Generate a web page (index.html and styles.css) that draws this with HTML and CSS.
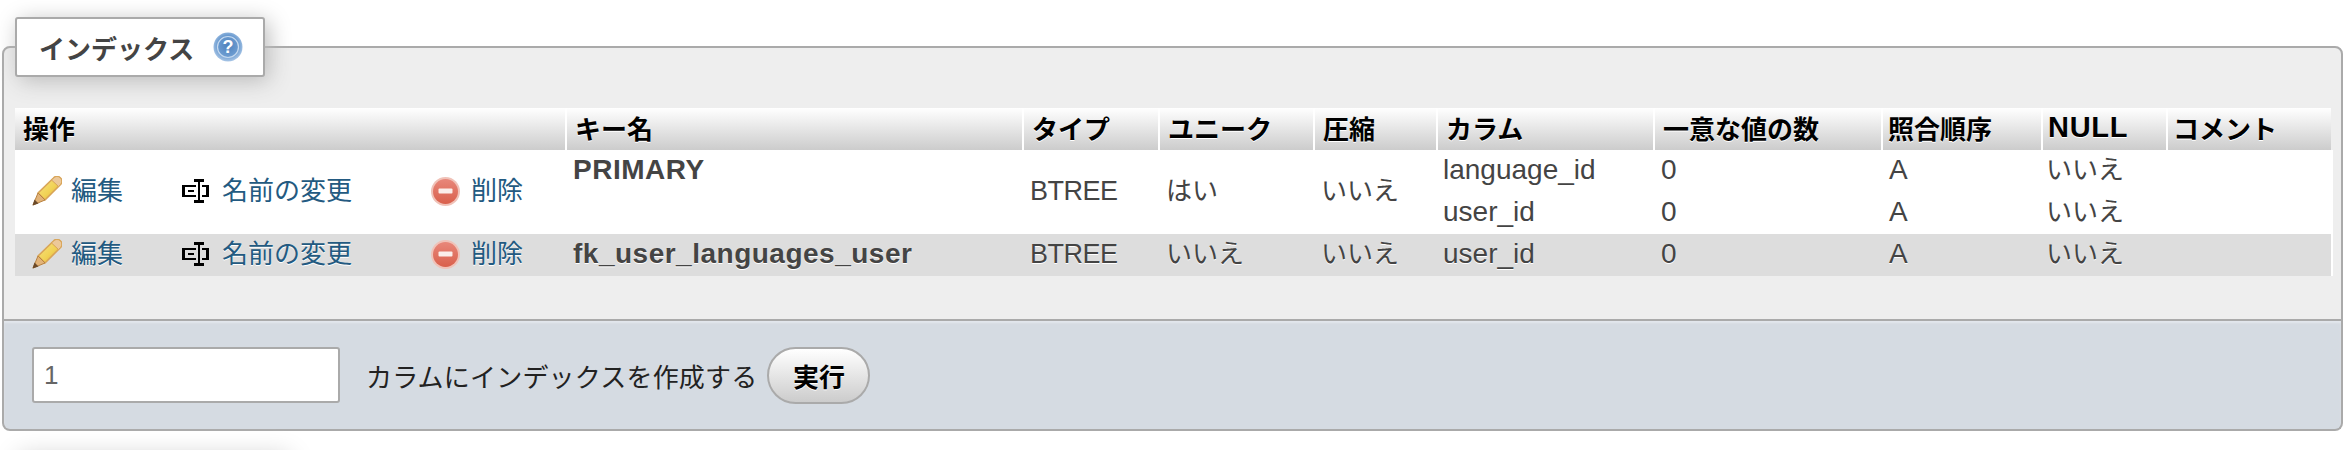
FILE: index.html
```html
<!DOCTYPE html>
<html>
<head>
  <meta charset="utf-8">
  <link rel="stylesheet" href="styles.css">
</head>
<body>
  <fieldset class="index-box">
    <legend>
      <span>インデックス</span>
      <svg class="help-icon" viewBox="0 0 30 30" width="30" height="30">
        <defs>
          <radialGradient id="helpFill" cx="50%" cy="45%" r="55%">
            <stop offset="0%" stop-color="#4f82bd"/>
            <stop offset="65%" stop-color="#6b9bd0"/>
            <stop offset="100%" stop-color="#a9c6e6"/>
          </radialGradient>
        </defs>
        <circle cx="15" cy="15" r="14.5" fill="url(#helpFill)"/>
        <circle cx="15" cy="15" r="10.5" fill="none" stroke="#c5d9ef" stroke-width="1.2"/>
        <text x="15" y="21" class="help-mark">?</text>
      </svg>
    </legend>
    <table class="index-table">
      <colgroup>
        <col class="col-edit">
        <col class="col-rename">
        <col class="col-drop">
        <col class="col-key">
        <col class="col-type">
        <col class="col-unique">
        <col class="col-packed">
        <col class="col-column">
        <col class="col-card">
        <col class="col-collation">
        <col class="col-null">
        <col class="col-comment">
      </colgroup>
      <thead>
        <tr>
          <th colspan="3">操作</th>
          <th>キー名</th>
          <th>タイプ</th>
          <th>ユニーク</th>
          <th>圧縮</th>
          <th>カラム</th>
          <th>一意な値の数</th>
          <th class="narrow">照合順序</th>
          <th class="narrow null-head">NULL</th>
          <th class="narrow">コメント</th>
        </tr>
      </thead>
      <tbody>
        <tr>
          <td rowspan="2" class="action"><a href="#"><svg class="icon" viewBox="0 0 30 30" width="30" height="30"><use href="#pencil"/></svg>編集</a></td>
          <td rowspan="2" class="action rename"><a href="#"><svg class="icon" viewBox="0 0 27 24" width="27" height="24"><use href="#rename"/></svg>名前の変更</a></td>
          <td rowspan="2" class="action drop"><a href="#"><svg class="icon" viewBox="0 0 29 29" width="29" height="29"><use href="#minus"/></svg>削除</a></td>
          <td rowspan="2" class="key-name top">PRIMARY</td>
          <td rowspan="2" class="type">BTREE</td>
          <td rowspan="2">はい</td>
          <td rowspan="2">いいえ</td>
          <td class="column-name">language_id</td>
          <td class="latin">0</td>
          <td class="latin">A</td>
          <td class="tight">いいえ</td>
          <td rowspan="2" class="last"></td>
        </tr>
        <tr>
          <td class="column-name">user_id</td>
          <td class="latin">0</td>
          <td class="latin">A</td>
          <td class="tight">いいえ</td>
        </tr>
        <tr class="even">
          <td class="action"><a href="#"><svg class="icon" viewBox="0 0 30 30" width="30" height="30"><use href="#pencil"/></svg>編集</a></td>
          <td class="action rename"><a href="#"><svg class="icon" viewBox="0 0 27 24" width="27" height="24"><use href="#rename"/></svg>名前の変更</a></td>
          <td class="action drop"><a href="#"><svg class="icon" viewBox="0 0 29 29" width="29" height="29"><use href="#minus"/></svg>削除</a></td>
          <td class="key-name">fk_user_languages_user</td>
          <td class="type">BTREE</td>
          <td>いいえ</td>
          <td>いいえ</td>
          <td class="column-name">user_id</td>
          <td class="latin">0</td>
          <td class="latin">A</td>
          <td class="tight">いいえ</td>
          <td class="last"></td>
        </tr>
      </tbody>
    </table>
  </fieldset>

  <form class="tbl-footer">
    <input type="text" class="count-input" value="1">
    <span class="footer-label">カラムにインデックスを作成する</span>
    <button type="button" class="go-button">実行</button>
  </form>

  <div class="next-legend"></div>

  <!-- icon sprites -->
  <svg class="sprites" width="0" height="0">
    <defs>
      <linearGradient id="pencilBody" x1="0" y1="0" x2="1" y2="1">
        <stop offset="0%" stop-color="#f8e58a"/>
        <stop offset="55%" stop-color="#f1d255"/>
        <stop offset="100%" stop-color="#d99a32"/>
      </linearGradient>
      <linearGradient id="minusFill" x1="0" y1="0" x2="0" y2="1">
        <stop offset="0%" stop-color="#e8877a"/>
        <stop offset="100%" stop-color="#d9604c"/>
      </linearGradient>
      <symbol id="pencil" viewBox="0 0 30 30">
        <path d="M6 17L21.500 2a4.500 4.500 0 0 1 7 6.500L13 24z" fill="url(#pencilBody)" stroke="#d8a458" stroke-width="1.600" stroke-linejoin="round"/>
        <path d="M21.500 2a4.500 4.500 0 0 1 7 6.500L26.500 10.500L19.500 4z" fill="#ecc899" stroke="#d8a458" stroke-width="1"/>
        <path d="M6 17L13 24L1 29z" fill="#e2b378" stroke="#b98240" stroke-width="1" stroke-linejoin="round"/>
        <path d="M2.500 23.500L6.500 27.500L0.500 29.500z" fill="#6b4a2a"/>
      </symbol>
      <symbol id="rename" viewBox="0 0 27 24">
        <g fill="none" stroke="#000" stroke-width="2.600" shape-rendering="crispEdges">
          <path d="M14 7H1.500V17H14"/>
          <path d="M6 12H12"/>
          <path d="M17 2V22"/>
          <path d="M12 1.500H22M12 22.500H22"/>
          <path d="M20 7H25.500V17H20"/>
        </g>
      </symbol>
      <symbol id="minus" viewBox="0 0 29 29">
        <circle cx="14.500" cy="14.500" r="14.500" fill="#f0c2b8"/>
        <circle cx="14.500" cy="14.500" r="12.500" fill="url(#minusFill)"/>
        <rect x="7.500" y="11.500" width="14" height="5" rx="1" fill="#fbeeea"/>
      </symbol>
    </defs>
  </svg>
</body>
</html>
```

FILE: styles.css
```css
html {
  overflow: hidden;
}

body {
  margin: 0;
  padding: 17px 6px 0 2px;
  font-family: "Liberation Sans", "Noto Sans CJK JP", sans-serif;
  font-size: 26px;
  color: #444;
  background: #fff;
}

.index-box {
  margin: 0;
  padding: 31px 11px 43px;
  min-width: 0;
  background: #eee;
  border: 2px solid #aaa;
  border-radius: 8px 8px 0 0;
}

.index-box legend {
  display: flex;
  align-items: center;
  box-sizing: border-box;
  width: 250px;
  height: 60px;
  padding: 0 22px;
  font-weight: bold;
  white-space: nowrap;
  background: #fff;
  border: 2px solid #aaa;
  border-radius: 3px;
  box-shadow: 4px 4px 22px #bbb;
}

.help-icon {
  flex: none;
  margin-left: 19px;
}

.help-mark {
  font-size: 18px;
  font-weight: bold;
  text-anchor: middle;
  fill: #fff;
}

.index-table {
  table-layout: fixed;
  width: 2318px;
  border-collapse: separate;
  border-spacing: 0;
  background: #fff;
}

.col-edit { width: 162px; }
.col-rename { width: 248px; }
.col-drop { width: 142px; }
.col-key { width: 457px; }
.col-type { width: 136px; }
.col-unique { width: 155px; }
.col-packed { width: 123px; }
.col-column { width: 217px; }
.col-card { width: 228px; }
.col-collation { width: 160px; }
.col-null { width: 125px; }
.col-comment { width: 165px; }

.index-table th {
  box-sizing: border-box;
  height: 42px;
  padding: 0 0 4px 8px;
  text-align: left;
  font-weight: bold;
  color: #000;
  text-shadow: 0 1px 0 #fff;
  white-space: nowrap;
  background: linear-gradient(#fff, #ccc);
  border-right: 2px solid #fff;
}

.index-table th.narrow {
  padding-left: 5px;
}

.index-table th:last-child {
  border-right: 2px solid #eee;
  background-clip: padding-box;
}

.index-table th.null-head {
  font-size: 29px;
  letter-spacing: 0.7px;
}

.index-table td {
  box-sizing: border-box;
  height: 42px;
  padding: 0 0 2px 6px;
  line-height: 30px;
  white-space: nowrap;
  vertical-align: middle;
}

.index-table td.top {
  vertical-align: top;
  padding-top: 5px;
}

.index-table td.key-name {
  font-size: 28px;
  font-weight: bold;
  letter-spacing: 0.5px;
}

.index-table td.type {
  font-size: 27px;
  letter-spacing: -0.5px;
}

.index-table td.column-name {
  padding-left: 5px;
  font-size: 28px;
}

.index-table td.latin {
  font-size: 28px;
}

.index-table td.tight {
  padding-left: 3px;
}

.even td {
  background: #ddd;
  text-shadow: 0 1px 0 #fff;
}

.even td.last {
  border-right: 2px solid #fff;
}

.index-table td.action {
  padding-left: 17px;
}

.index-table td.rename {
  padding-left: 5px;
}

.index-table td.drop {
  padding-left: 6px;
}

.action a {
  display: flex;
  align-items: center;
  color: #235a81;
  text-decoration: none;
}

.icon {
  flex: none;
  margin-right: 9px;
}

.rename .icon {
  margin-right: 13px;
}

.drop .icon {
  margin-right: 11px;
}

.tbl-footer {
  display: flex;
  align-items: center;
  height: 108px;
  padding: 0 0 0 28px;
  color: #000;
  background: #d5dbe2;
  border: 2px solid #aaa;
  border-top: none;
  border-radius: 0 0 8px 8px;
  box-shadow: inset 0 2px 2px #e3e7ec;
}

.count-input {
  box-sizing: border-box;
  width: 308px;
  height: 56px;
  margin: 0;
  padding: 0 10px;
  font: inherit;
  color: #666;
  background: #fff;
  border: 2px solid #aaa;
  border-radius: 3px;
}

.footer-label {
  margin-left: 26px;
  color: #222;
  letter-spacing: 0.2px;
}

.go-button {
  box-sizing: border-box;
  width: 103px;
  height: 57px;
  margin-left: 10px;
  padding: 0;
  font: inherit;
  font-weight: bold;
  color: #000;
  text-shadow: 0 1px 0 #fff;
  background: linear-gradient(#fff, #ccc);
  border: 2px solid #aaa;
  border-radius: 30px;
}

/* shadow of the next box, which starts just below the fold */
.next-legend {
  width: 210px;
  height: 0;
  margin: 19px 0 0 43px;
  box-shadow: 4px 36px 26px 30px #ccc;
}

.sprites {
  position: absolute;
}
```
